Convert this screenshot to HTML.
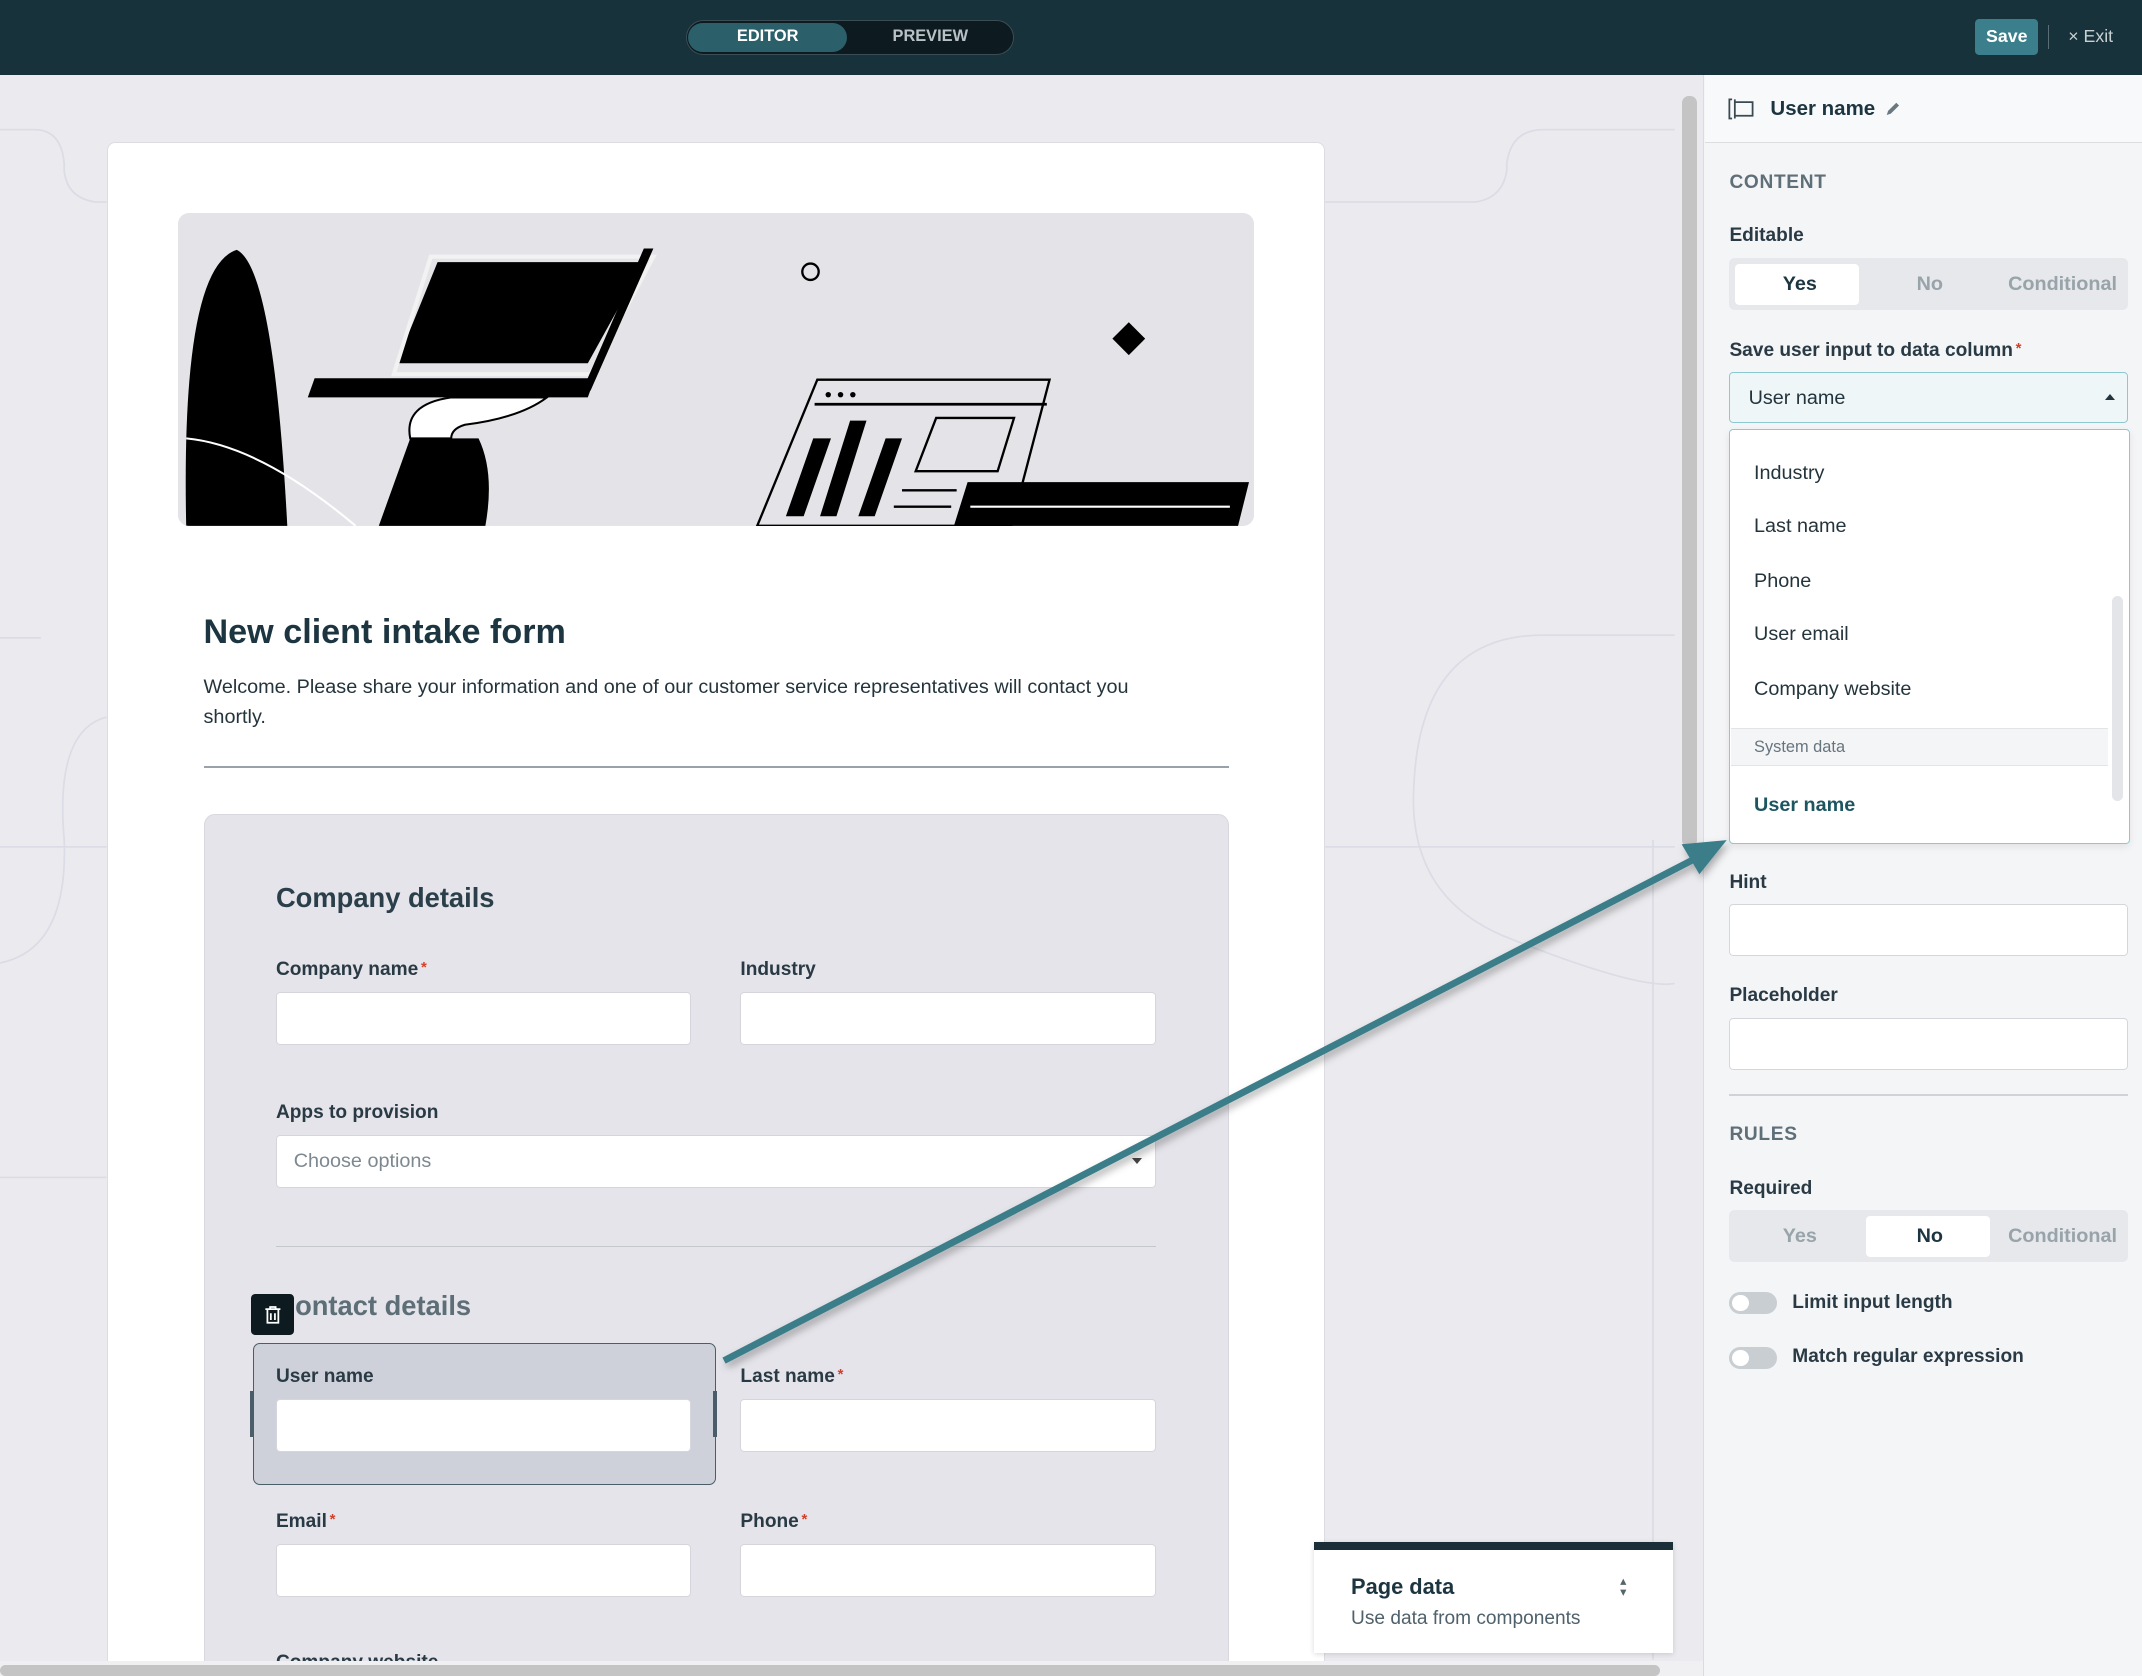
<!DOCTYPE html>
<html><head><meta charset="utf-8"><style>
*{box-sizing:border-box;margin:0;padding:0}
html,body{width:2142px;height:1676px;overflow:hidden;background:#ebebef}
#w{zoom:1.36607;width:1568px;height:1227px;position:relative;font-family:"Liberation Sans",sans-serif;color:#1c3540;overflow:hidden}
.a{position:absolute}
.lbl{position:absolute;font-size:14px;font-weight:bold;color:#2a3a44}
.req{color:#d23f2a;font-size:11px;vertical-align:top;margin-left:2px}
.inp{position:absolute;background:#fff;border:1px solid #d5d6dc;border-radius:3px}
.item{position:absolute;left:1284px;font-size:14.5px;color:#24343c}
.seg{position:absolute;left:1266px;width:292px;height:38px;background:#e6e8eb;border-radius:4px}
.seg span{position:absolute;top:11px;font-size:14.5px;font-weight:bold;color:#98a3aa}
</style></head><body><div id="w">
<div class="a" style="left:0;top:0;width:1568px;height:55px;background:#17323b"></div>
<div class="a" style="left:502px;top:15px;width:240px;height:25px;background:#0d1a20;border:1px solid #3a4d55;border-radius:13px"></div>
<div class="a" style="left:504px;top:17px;width:116px;height:21px;background:#2b5f69;border-radius:11px"></div>
<div class="a" style="left:504px;top:20px;width:116px;text-align:center;font-size:12px;font-weight:bold;color:#fff">EDITOR</div>
<div class="a" style="left:622px;top:20px;width:118px;text-align:center;font-size:12px;font-weight:bold;color:#b8c2c6">PREVIEW</div>
<div class="a" style="left:1446px;top:14px;width:46px;height:26px;background:#3b7f8c;border-radius:3px;color:#fff;font-size:13px;font-weight:bold;text-align:center;line-height:26px">Save</div>
<div class="a" style="left:1499px;top:18px;width:1px;height:18px;background:#5a6e75"></div>
<div class="a" style="left:1514px;top:19px;font-size:13px;color:#c8d0d3">× Exit</div>

<div class="a" style="left:0;top:55px;width:1230px;height:1161px;overflow:hidden">
<div class="a" style="left:0;top:-55px;width:1230px;height:1216px;overflow:hidden">
<svg class="a" style="left:0;top:55px" width="1226" height="1160"><g fill="none" stroke="#dcdce6" stroke-width="1.3">
<path d="M0 40 H25 Q45 40 47 65 V70 Q49 90 70 93 H78"/><path d="M970 93 H1080 Q1100 90 1103 70 V65 Q1106 40 1130 40 H1226"/>
<path d="M0 412 H30 M0 565 H78 M970 565 H1226 M0 807 H78"/><path d="M1226 410 H1130 Q1040 410 1035 520 Q1030 600 1100 630 Q1200 670 1226 665"/>
<path d="M78 470 Q40 480 47 560 Q50 640 0 650"/><path d="M1210 560 V1160"/></g></svg>

<div class="a" style="left:78px;top:104px;width:892px;height:1130px;background:#fff;border:1px solid #dcdce2;border-radius:6px"></div>
<div class="a" style="left:130px;top:156px;width:788px;height:229px;background:#e4e3e8;border-radius:8px;overflow:hidden">
<svg width="788" height="229">
<path d="M6 229 Q2 40 43 27 Q70 40 80 229 Z" fill="#000"/>
<path d="M6 165 Q60 170 130 229" fill="none" stroke="#fff" stroke-width="1.5"/>
<path d="M190 36 H341 L300 110 H160 Z" fill="#000"/><path d="M185 32 H348 L302 118 H158 Z" fill="none" stroke="#f2f2f2" stroke-width="3"/>
<path d="M341 26 L348 26 L302 130 L296 130Z" fill="#000"/>
<path d="M100 121 H305 L300 135 H95 Z" fill="#000"/>
<path d="M170 165 Q165 140 200 135 H270 Q250 150 210 155 Q200 158 200 165 Z" fill="#fff" stroke="#000" stroke-width="1.5"/>
<path d="M170 165 H220 Q232 190 225 229 H147 Z" fill="#000"/>
<circle cx="463" cy="43" r="6" fill="none" stroke="#000" stroke-width="1.7"/>
<path d="M696 80 L708 92 L696 104 L684 92Z" fill="#000"/>
<path d="M468 122 H638 L610 229 H424 Z" fill="none" stroke="#000" stroke-width="1.7"/>
<path d="M466 140 H636" stroke="#000" stroke-width="2"/>
<circle cx="476" cy="133" r="2" fill="#000"/><circle cx="485" cy="133" r="2" fill="#000"/><circle cx="494" cy="133" r="2" fill="#000"/>
<path d="M465 165 L478 165 L458 222 L445 222Z M492 152 L504 152 L482 222 L470 222Z M518 165 L530 165 L510 222 L498 222Z" fill="#000"/>
<path d="M555 150 H612 L600 189 H540Z" fill="none" stroke="#000" stroke-width="1.7"/>
<path d="M530 203 H570 M524 215 H566" stroke="#000" stroke-width="1.7"/>
<path d="M578 197 H784 L776 229 H568 Z" fill="#000"/><path d="M580 215 H770" stroke="#fff" stroke-width="1.5"/>
</svg></div>
<div class="a" style="left:149px;top:449px;font-size:25px;font-weight:bold;color:#1c3540">New client intake form</div>
<div class="a" style="left:149px;top:492px;width:700px;font-size:14.5px;line-height:22px;color:#24343c">Welcome. Please share your information and one of our customer service representatives will contact you shortly.</div>
<div class="a" style="left:149px;top:561px;width:751px;height:1px;background:#9aa1a8"></div>

<div class="a" style="left:149px;top:596px;width:751px;height:700px;background:#e4e4ea;border:1px solid #d8d8de;border-radius:8px"></div>
<div class="a" style="left:202px;top:646px;font-size:20px;font-weight:bold;color:#2a3f4a">Company details</div>
<div class="lbl" style="left:202px;top:702px">Company name<span class="req">*</span></div>
<div class="lbl" style="left:542px;top:702px">Industry</div>
<div class="inp" style="left:202px;top:726px;width:304px;height:39px"></div>
<div class="inp" style="left:542px;top:726px;width:304px;height:39px"></div>
<div class="lbl" style="left:202px;top:807px">Apps to provision</div>
<div class="inp" style="left:202px;top:831px;width:644px;height:39px"></div>
<div class="a" style="left:215px;top:842px;font-size:14.5px;color:#7d8890">Choose options</div>
<div class="a" style="left:829px;top:848px;border:4px solid transparent;border-top:5px solid #444"></div>
<div class="a" style="left:202px;top:912px;width:644px;height:1px;background:#c3c6cc"></div>
<div class="a" style="left:216px;top:944px;font-size:20px;font-weight:bold;color:#5d6e77">ontact details</div>
<div class="a" style="left:184px;top:947px;width:31px;height:30px;background:#0d1a20;border-radius:3px"></div>
<svg class="a" style="left:193px;top:955px" width="13" height="14"><path d="M1 3H12M4.5 3V1.5H8.5V3M2.5 3.5V13H10.5V3.5M5 6V11M8 6V11" fill="none" stroke="#fff" stroke-width="1.3"/></svg>
<div class="a" style="left:185px;top:983px;width:339px;height:104px;background:#cfd1da;border:1px solid #4a5d68;border-radius:5px"></div>
<div class="a" style="left:183px;top:1018px;width:3px;height:34px;background:#4a5d68"></div>
<div class="a" style="left:522px;top:1018px;width:3px;height:34px;background:#4a5d68"></div>
<div class="lbl" style="left:202px;top:1000px">User name</div>
<div class="lbl" style="left:542px;top:1000px">Last name<span class="req">*</span></div>
<div class="inp" style="left:202px;top:1024px;width:304px;height:39px"></div>
<div class="inp" style="left:542px;top:1024px;width:304px;height:39px"></div>
<div class="lbl" style="left:202px;top:1106px">Email<span class="req">*</span></div>
<div class="lbl" style="left:542px;top:1106px">Phone<span class="req">*</span></div>
<div class="inp" style="left:202px;top:1130px;width:304px;height:39px"></div>
<div class="inp" style="left:542px;top:1130px;width:304px;height:39px"></div>
<div class="lbl" style="left:202px;top:1209px">Company website</div>
</div></div>

<div class="a" style="left:1231px;top:70px;width:11px;height:550px;background:#c4c4c4;border-radius:5px"></div>
<div class="a" style="left:0;top:1216px;width:1247px;height:11px;background:#f0f0f3"></div>
<div class="a" style="left:0;top:1219px;width:1215px;height:8px;background:#c4c4c4;border-radius:4px"></div>

<div class="a" style="left:962px;top:1129px;width:263px;height:81px;background:#fff;border-top:6px solid #1a2f38;box-shadow:0 1px 4px rgba(0,0,0,.15)"></div>
<div class="a" style="left:989px;top:1152px;font-size:16px;font-weight:bold;color:#1c3540">Page data</div>
<div class="a" style="left:989px;top:1177px;font-size:14px;color:#4f616b">Use data from components</div>
<div class="a" style="left:1186px;top:1154px;font-size:9px;color:#55656e;line-height:8px">▴<br>▾</div>

<div class="a" style="left:1247px;top:55px;width:321px;height:1172px;background:#f4f5f7;border-left:1px solid #dadce0"></div>
<div class="a" style="left:1248px;top:55px;width:320px;height:50px;background:#f8f9fa;border-bottom:1px solid #dadce0"></div>
<svg class="a" style="left:1265px;top:72px" width="20" height="16"><path d="M3 1H1V15H3M5 1V15M5 3H18V13H5" fill="none" stroke="#3a4a52" stroke-width="1.3"/></svg>
<div class="a" style="left:1296px;top:71px;font-size:15px;font-weight:bold;color:#1c3540">User name</div>
<svg class="a" style="left:1379px;top:73px" width="13" height="13"><path d="M2 11L3 8L9 2L11 4L5 10Z" fill="#6a7880"/></svg>
<div class="a" style="left:1266px;top:126px;font-size:14px;font-weight:bold;color:#5f6f78;letter-spacing:.5px">CONTENT</div>
<div class="lbl" style="left:1266px;top:165px">Editable</div>
<div class="seg" style="top:189px"><div class="a" style="left:4px;top:4px;width:91px;height:30px;background:#fff;border-radius:3px"></div><span style="left:39px;color:#1c3540">Yes</span><span style="left:137px">No</span><span style="left:204px">Conditional</span></div>
<div class="lbl" style="left:1266px;top:249px">Save user input to data column<span class="req">*</span></div>
<div class="a" style="left:1266px;top:272px;width:292px;height:38px;background:#eef6f8;border:1px solid #8cc8d0;border-radius:3px"></div>
<div class="a" style="left:1280px;top:283px;font-size:14.5px;color:#24343c">User name</div>
<div class="a" style="left:1541px;top:285px;border:4px solid transparent;border-bottom:5px solid #24343c"></div>
<div class="lbl" style="left:1266px;top:638px">Hint</div>
<div class="inp" style="left:1266px;top:662px;width:292px;height:38px"></div>
<div class="lbl" style="left:1266px;top:721px">Placeholder</div>
<div class="inp" style="left:1266px;top:745px;width:292px;height:38px"></div>
<div class="a" style="left:1266px;top:801px;width:292px;height:1px;background:#cfd3d7"></div>
<div class="a" style="left:1266px;top:823px;font-size:14px;font-weight:bold;color:#5f6f78;letter-spacing:.5px">RULES</div>
<div class="lbl" style="left:1266px;top:862px">Required</div>
<div class="seg" style="top:886px"><div class="a" style="left:100px;top:4px;width:91px;height:30px;background:#fff;border-radius:3px"></div><span style="left:39px">Yes</span><span style="left:137px;color:#1c3540">No</span><span style="left:204px">Conditional</span></div>
<div class="a" style="left:1266px;top:946px;width:35px;height:16px;background:#c9ced3;border-radius:8px"></div><div class="a" style="left:1268px;top:948px;width:12px;height:12px;background:#fff;border-radius:6px"></div>
<div class="lbl" style="left:1312px;top:946px">Limit input length</div>
<div class="a" style="left:1266px;top:986px;width:35px;height:16px;background:#c9ced3;border-radius:8px"></div><div class="a" style="left:1268px;top:988px;width:12px;height:12px;background:#fff;border-radius:6px"></div>
<div class="lbl" style="left:1312px;top:985px">Match regular expression</div>

<div class="a" style="left:1266px;top:314px;width:293px;height:304px;background:#fff;border:1px solid #8cc8d0;border-radius:3px;box-shadow:0 2px 6px rgba(0,0,0,.08)"></div>
<div class="item" style="top:338px">Industry</div>
<div class="item" style="top:377px">Last name</div>
<div class="item" style="top:417px">Phone</div>
<div class="item" style="top:456px">User email</div>
<div class="item" style="top:496px">Company website</div>
<div class="a" style="left:1267px;top:533px;width:276px;height:28px;background:#f4f5f7;border-top:1px solid #e2e4e7;border-bottom:1px solid #e2e4e7"></div>
<div class="item" style="top:540px;font-size:12px;color:#66757d">System data</div>
<div class="item" style="top:581px;font-weight:bold;color:#1d5560">User name</div>
<div class="a" style="left:1546px;top:436px;width:8px;height:150px;background:#e3e5e8;border-radius:4px"></div>

<svg class="a" style="left:0;top:0" width="1568" height="1227"><defs><filter id="s"><feDropShadow dx="2" dy="3" stdDeviation="3" flood-opacity=".3"/></filter></defs>
<g filter="url(#s)"><path d="M530 996 L1242 628" stroke="#3a7d88" stroke-width="5"/><path d="M1264 615 L1231 618 L1244 640 Z" fill="#3a7d88"/></g></svg>
</div></body></html>
